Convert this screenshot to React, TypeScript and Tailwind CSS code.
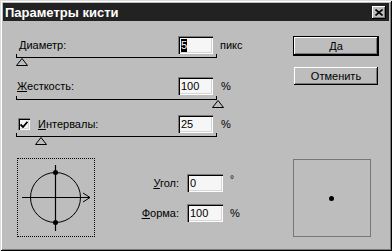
import React from "react";

const sunken =
  "shadow-[inset_1px_1px_0_#7b7b7b,inset_2px_2px_0_#000,inset_-1px_-1px_0_#fff,inset_-2px_-2px_0_#d6d6d6]";
const raised =
  "shadow-[inset_-1px_-1px_0_#000,inset_1px_1px_0_#fff,inset_-2px_-2px_0_#7b7b7b]";

function Field({ value, w = 35, selected = false }: { value: string; w?: number; selected?: boolean }) {
  return (
    <div
      className={`h-[18px] bg-[#f6f6f6] ${sunken} flex items-center pl-[3px] leading-none`}
      style={{ width: w }}
    >
      {selected ? <span className="bg-black text-white px-[0px] py-[1px]">{value}</span> : <span>{value}</span>}
    </div>
  );
}

function Thumb({ left }: { left: number }) {
  return (
    <svg className="absolute top-[4px]" style={{ left }} width="12" height="8" viewBox="0 0 12 8">
      <path d="M6 0.5 L11.5 7.5 L0.5 7.5 Z" fill="#bdbdbd" stroke="#000" strokeWidth="1" />
    </svg>
  );
}

function Slider({ thumb }: { thumb: number }) {
  return (
    <div className="relative w-[201px] h-[12px]">
      <div className="h-[4px] border-x border-b border-black" />
      <Thumb left={thumb} />
    </div>
  );
}

function Button({ label, isDefault = false }: { label: string; isDefault?: boolean }) {
  return (
    <div className={isDefault ? "border border-black" : "border border-transparent"}>
      <div className={`w-[84px] h-[18px] bg-[#bdbdbd] ${raised} flex items-center justify-center leading-none`}>
        {label}
      </div>
    </div>
  );
}

export default function App() {
  return (
    <div className="w-[392px] h-[251px] bg-[#bdbdbd] p-[3px] shadow-[inset_1px_1px_0_#dcdcdc,inset_-1px_-1px_0_#000,inset_2px_2px_0_#fff,inset_-2px_-2px_0_#7b7b7b] font-['Liberation_Sans',Arial,sans-serif] text-[11px] text-black flex flex-col">
      <div className="h-[18px] bg-[#222222] flex items-center justify-between pl-[2px] pr-[3px]">
        <span className="text-white font-bold text-[13px] leading-none">Параметры кисти</span>
        <div className={`w-[14px] h-[13px] bg-[#bdbdbd] ${raised} flex items-center justify-center`}>
          <svg width="8" height="7" viewBox="0 0 8 7">
            <path d="M0.5 0.5 L7.5 6.5 M7.5 0.5 L0.5 6.5" stroke="#000" strokeWidth="1.6" />
          </svg>
        </div>
      </div>

      <div className="flex">
        <div className="pl-[13px] pt-[15px] w-[250px]">
          <div className="flex items-center h-[18px]">
            <div className="w-[162px] pl-[3px]">
              <u>Д</u>иаметр:
            </div>
            <Field value="5" selected />
            <span className="ml-[7px]">пикс</span>
          </div>
          <Slider thumb={0} />

          <div className="flex items-center h-[18px] mt-[11px]">
            <div className="w-[162px] pl-[1px]">
              <u>Ж</u>есткость:
            </div>
            <Field value="100" />
            <span className="ml-[8px]">%</span>
          </div>
          <div className="mt-[1px]">
            <Slider thumb={196} />
          </div>

          <div className="flex items-center h-[18px] mt-[7px]">
            <div className="w-[162px] pl-[2px] flex items-center">
              <div className={`w-[12px] h-[12px] bg-[#f6f6f6] ${sunken} flex items-center justify-center`}>
                <svg width="8" height="7" viewBox="0 0 8 7">
                  <path d="M0.5 3.5 L3 6 L7.5 0.8" stroke="#000" strokeWidth="1.8" fill="none" />
                </svg>
              </div>
              <span className="ml-[8px]">
                <u>И</u>нтервалы:
              </span>
            </div>
            <Field value="25" />
            <span className="ml-[8px]">%</span>
          </div>
          <Slider thumb={19} />
        </div>

        <div className="pl-[40px] pt-[15px] flex flex-col gap-[10px]">
          <Button label="Да" isDefault />
          <Button label="Отменить" />
        </div>
      </div>

      <div className="flex items-start pl-[14px] mt-[13px]">
        <div className="w-[78px] h-[79px] border border-dotted border-black relative">
          <svg width="76" height="77" viewBox="0 0 76 77" className="absolute left-0 top-0">
            <circle cx="37.5" cy="38.5" r="25" fill="none" stroke="#000" strokeWidth="1" />
            <line x1="37.5" y1="6" x2="37.5" y2="72" stroke="#000" strokeWidth="1.2" />
            <line x1="4" y1="38.5" x2="72" y2="38.5" stroke="#000" strokeWidth="1.2" />
            <path d="M65 34 L72 38.5 L65 43" fill="none" stroke="#000" strokeWidth="1" />
            <circle cx="37.5" cy="13.5" r="2.5" fill="#000" />
            <circle cx="37.5" cy="63.5" r="2.5" fill="#000" />
          </svg>
        </div>

        <div className="flex flex-col gap-[12px] mt-[16px]">
          <div className="flex items-center">
            <div className="w-[92px] text-right pr-[8px]">
              <u>У</u>гол:
            </div>
            <Field value="0" w={36} />
            <span className="ml-[7px] -mt-[7px] text-[10px] text-black">°</span>
          </div>
          <div className="flex items-center">
            <div className="w-[92px] text-right pr-[8px]">
              <u>Ф</u>орма:
            </div>
            <Field value="100" w={36} />
            <span className="ml-[7px]">%</span>
          </div>
        </div>

        <div className="ml-[53px] mt-[1px] w-[78px] h-[78px] border border-[#777] flex items-center justify-center">
          <div className="w-[5px] h-[5px] rounded-full bg-black" />
        </div>
      </div>
    </div>
  );
}
